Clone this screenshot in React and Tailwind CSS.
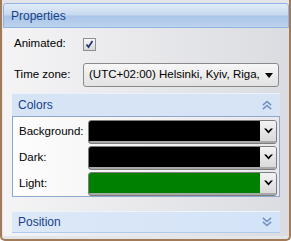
import React from "react";

const font = { fontFamily: '"Liberation Sans", Arial, sans-serif' };

function DoubleChevron({ up }) {
  return (
    <svg width="10" height="10" viewBox="0 0 10 10" className="block">
      <g fill="none" stroke="#6f91c4" strokeWidth="1.6" strokeLinecap="square" transform={up ? "" : "rotate(180 5 5)"}>
        <polyline points="1.5,4.5 5,1.5 8.5,4.5" />
        <polyline points="1.5,8.5 5,5.5 8.5,8.5" />
      </g>
    </svg>
  );
}

function VChevron() {
  return (
    <svg width="9" height="6" viewBox="0 0 9 6" className="block">
      <polygon points="0,0.5 2.2,0.5 4.5,3 6.8,0.5 9,0.5 4.5,5.5" fill="#000" />
    </svg>
  );
}

function ColorField({ label, color }) {
  return (
    <div className="flex items-center h-[24px]">
      <div className="w-[75px] shrink-0 pl-[6px] text-[11.5px] text-black leading-none whitespace-nowrap">{label}</div>
      <div className="w-[189px] shrink-0 h-[24px] border border-[#7e7e7e] rounded-[3px] bg-[#c9c9c9] flex overflow-hidden">
        <div className="flex-1 border-b-2 border-[#a8a8a8]" style={{ background: color }} />
        <div className="w-[16px] bg-[linear-gradient(to_bottom,#f3f3f3,#dadada)] flex items-center justify-center border-b-2 border-[#a8a8a8]">
          <VChevron />
        </div>
      </div>
    </div>
  );
}

export default function App() {
  return (
    <div
      style={font}
      className="w-[291px] h-[241px] bg-[#e4e5e8] border-x-2 border-b-2 border-[#a47b58] rounded-b-[5px] overflow-hidden"
    >
      <div className="ml-[1px] mt-[3px] w-[286px] h-[233px] flex flex-col">
        <div className="h-[25px] shrink-0 border border-[#8fb3e2] rounded-t-[3px] bg-[linear-gradient(to_bottom,#e2ecf8_0%,#c6d9ef_48%,#a9c5e8_52%,#bdd3ee_100%)] flex items-center pl-[7px]">
          <span className="text-[12px] text-[#15428b] leading-none">Properties</span>
        </div>
        <div className="flex-1 bg-[linear-gradient(to_right,#f4f4f5,#dbdce1)] px-[9px] flex flex-col">
          <div className="mt-[9px] h-[14px] flex items-center pl-[2px]">
            <div className="w-[69px] shrink-0 text-[11.5px] text-black leading-none">Animated:</div>
            <div className="w-[13px] h-[13px] border border-[#8e8f8f] bg-[linear-gradient(to_bottom,#f8f8f8,#d6d6d6)] flex items-center justify-center">
              <svg width="9" height="9" viewBox="0 0 9 9">
                <polyline points="1.5,4.5 3.5,7 7.5,1" fill="none" stroke="#22357f" strokeWidth="1.8" />
              </svg>
            </div>
          </div>
          <div className="mt-[12px] h-[24px] flex items-center pl-[2px]">
            <div className="w-[69px] shrink-0 text-[11.5px] text-black leading-none">Time zone:</div>
            <div className="w-[196px] shrink-0 h-[24px] border border-[#8a8a8a] rounded-[3px] bg-[linear-gradient(to_bottom,#f7f7f7,#e2e2e2)] flex items-center overflow-hidden">
              <div className="flex-1 pl-[5px] text-[11.5px] text-black leading-none whitespace-nowrap overflow-hidden">
                (UTC+02:00) Helsinki, Kyiv, Riga,
              </div>
              <div className="w-[18px] shrink-0 flex items-center justify-center">
                <svg width="8" height="5" viewBox="0 0 8 5"><polygon points="0,0 8,0 4,5" fill="#000" /></svg>
              </div>
            </div>
          </div>
          <div className="mt-[6px] h-[23px] bg-[#d6e4f6] border-t border-[#eaf1fb] flex items-center justify-between pl-[6px] pr-[8px]">
            <span className="text-[12px] text-[#15428b] leading-none">Colors</span>
            <DoubleChevron up />
          </div>
          <div className="h-[81px] border border-[#8da8cc] bg-[linear-gradient(to_right,#fdfdfd,#e9e9eb)] pt-[3px] flex flex-col gap-[2px]">
            <ColorField label="Background:" color="#000000" />
            <ColorField label="Dark:" color="#000000" />
            <ColorField label="Light:" color="#008000" />
          </div>
          <div className="mt-[14px] h-[22px] bg-[linear-gradient(to_right,#dde8f7,#d3e3f8)] border-t border-[#eef4fc] border-b border-b-[#aecbee] flex items-center justify-between pl-[6px] pr-[8px]">
            <span className="text-[12px] text-[#15428b] leading-none">Position</span>
            <DoubleChevron />
          </div>
        </div>
      </div>
    </div>
  );
}
